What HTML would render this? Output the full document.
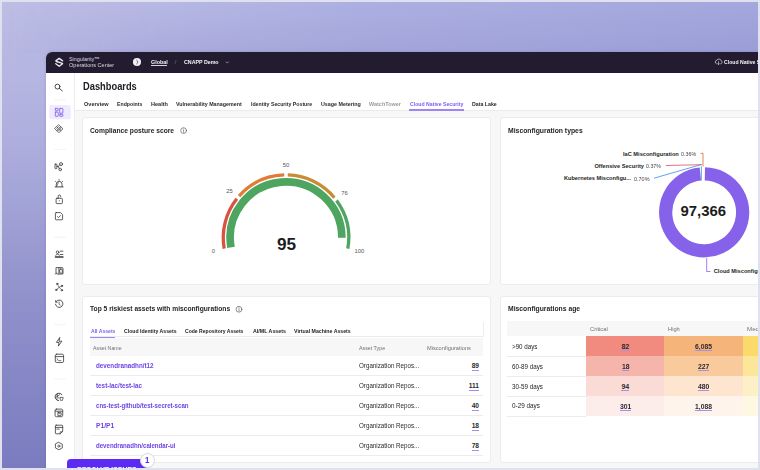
<!DOCTYPE html><html><head><meta charset="utf-8"><style>
*{margin:0;padding:0;box-sizing:border-box}
html,body{width:760px;height:470px;overflow:hidden;background:#e0e1ef;font-family:"Liberation Sans", sans-serif}
.t{position:absolute;white-space:nowrap;line-height:1}
#clip{position:absolute;left:2px;top:2px;width:755.7px;height:466px;overflow:hidden;
  background:linear-gradient(180deg,#bdbee5 0px,#adaedd 140px,#9090cb 300px,#7b7cc0 466px)}
#topov{position:absolute;left:0;top:0;width:760px;height:60px;background:linear-gradient(90deg,rgba(170,173,224,0) 0px,rgba(170,173,224,1) 360px,#a1a5dc 760px)}
#root{position:absolute;left:-2px;top:-2px;width:760px;height:470px}
#topov2{position:absolute;left:0;top:0;width:760px;height:52px;background:linear-gradient(180deg,rgba(255,255,255,0.03) 0px,rgba(60,50,140,0.06) 50px);-webkit-mask-image:linear-gradient(90deg,transparent 0px,#000 160px);mask-image:linear-gradient(90deg,transparent 0px,#000 160px)}
</style></head><body><div id="clip"><div id="topov"></div><div id="topov2"></div><div id="root"><div style="position:absolute;left:46px;top:52px;width:760px;height:430px;background:#f7f7f8;border-radius:6px 0 0 0;box-shadow:0 0 3px rgba(50,40,120,0.18)"></div><div style="position:absolute;left:46px;top:52px;width:760px;height:20.5px;background:#231b2f;border-radius:6px 0 0 0"></div><div style="position:absolute;left:46px;top:72.5px;width:28.5px;height:400px;background:#fff;border-right:1px solid #ececee"></div><div style="position:absolute;left:75px;top:72.5px;width:700px;height:38px;background:#fff;border-bottom:1px solid #ebebee"></div><div style="position:absolute;left:82px;top:117px;width:408.5px;height:167.5px;background:#fff;border:1px solid #ececee;border-radius:3px"></div><div style="position:absolute;left:499.5px;top:117px;width:300px;height:167.5px;background:#fff;border:1px solid #ececee;border-radius:3px"></div><div style="position:absolute;left:82px;top:295.8px;width:408.5px;height:167px;background:#fff;border:1px solid #ececee;border-radius:3px"></div><div style="position:absolute;left:499.5px;top:295.8px;width:300px;height:167px;background:#fff;border:1px solid #ececee;border-radius:3px"></div><div class="t" style="left:69.00px;top:56.60px;font-size:5.4px;font-weight:normal;color:#dcd9e4;">Singularity™</div><div class="t" style="left:69.00px;top:63.17px;font-size:5.6px;font-weight:normal;color:#dcd9e4;transform:scaleX(0.9887);transform-origin:0 0;">Operations Center</div><div class="t" style="left:150.90px;top:60.17px;font-size:5.6px;font-weight:bold;color:#f4f2f8;transform:scaleX(0.9652);transform-origin:0 0;">Global</div><div style="position:absolute;left:150.9px;top:64.9px;width:16.5px;height:0.6px;background:#d8d4e0"></div><div class="t" style="left:174.80px;top:60.21px;font-size:5.3px;font-weight:normal;color:#8a8596;">/</div><div class="t" style="left:184.20px;top:60.17px;font-size:5.6px;font-weight:bold;color:#f4f2f8;transform:scaleX(0.9459);transform-origin:0 0;">CNAPP Demo</div><div class="t" style="left:723.80px;top:59.67px;font-size:5.6px;font-weight:bold;color:#f4f2f8;transform:scaleX(0.9165);transform-origin:0 0;">Cloud Native Security</div><div class="t" style="left:83.00px;top:81.65px;font-size:10.4px;font-weight:bold;color:#202026;transform:scaleX(0.8957);transform-origin:0 0;">Dashboards</div><div class="t" style="left:83.80px;top:101.42px;font-size:6.0px;font-weight:bold;color:#2a2a30;transform:scaleX(0.9218);transform-origin:0 0;">Overview</div><div class="t" style="left:116.50px;top:101.42px;font-size:6.0px;font-weight:bold;color:#2a2a30;transform:scaleX(0.8656);transform-origin:0 0;">Endpoints</div><div class="t" style="left:150.70px;top:101.42px;font-size:6.0px;font-weight:bold;color:#2a2a30;transform:scaleX(0.9213);transform-origin:0 0;">Health</div><div class="t" style="left:176.20px;top:101.42px;font-size:6.0px;font-weight:bold;color:#2a2a30;transform:scaleX(0.8862);transform-origin:0 0;">Vulnerability Management</div><div class="t" style="left:251.00px;top:101.42px;font-size:6.0px;font-weight:bold;color:#2a2a30;transform:scaleX(0.8658);transform-origin:0 0;">Identity Security Posture</div><div class="t" style="left:321.00px;top:101.42px;font-size:6.0px;font-weight:bold;color:#2a2a30;transform:scaleX(0.8929);transform-origin:0 0;">Usage Metering</div><div class="t" style="left:369.00px;top:101.42px;font-size:6.0px;font-weight:bold;color:#9a9aa0;transform:scaleX(0.9139);transform-origin:0 0;">WatchTower</div><div class="t" style="left:410.00px;top:101.42px;font-size:6.0px;font-weight:bold;color:#7d5cf2;transform:scaleX(0.8611);transform-origin:0 0;">Cloud Native Security</div><div class="t" style="left:472.30px;top:101.42px;font-size:6.0px;font-weight:bold;color:#2a2a30;transform:scaleX(0.8710);transform-origin:0 0;">Data Lake</div><div style="position:absolute;left:409px;top:109px;width:55px;height:1.6px;background:#9d85f3"></div><div class="t" style="left:89.90px;top:126.84px;font-size:7.4px;font-weight:bold;color:#1f1f24;transform:scaleX(0.9060);transform-origin:0 0;">Compliance posture score</div><div class="t" style="left:507.90px;top:126.54px;font-size:7.4px;font-weight:bold;color:#1f1f24;transform:scaleX(0.9233);transform-origin:0 0;">Misconfiguration types</div><div class="t" style="left:90.30px;top:305.34px;font-size:7.4px;font-weight:bold;color:#1f1f24;transform:scaleX(0.9032);transform-origin:0 0;">Top 5 riskiest assets with misconfigurations</div><div class="t" style="left:507.70px;top:305.24px;font-size:7.4px;font-weight:bold;color:#1f1f24;transform:scaleX(0.9192);transform-origin:0 0;">Misconfigurations age</div><svg style="position:absolute;left:0;top:0" width="760" height="470"><path d="M224.20 248.60A62.75 62.75 0 0 1 236.82 198.72" stroke="#d9523f" stroke-width="3.3" fill="none"/><path d="M239.08 196.04A62.75 62.75 0 0 1 284.25 174.97" stroke="#e07b38" stroke-width="3.3" fill="none"/><path d="M287.75 174.97A62.75 62.75 0 0 1 334.35 197.70" stroke="#c98b34" stroke-width="3.3" fill="none"/><path d="M336.51 200.46A62.75 62.75 0 0 1 347.80 248.60" stroke="#4fa560" stroke-width="3.3" fill="none"/><path d="M231.00 247.40A55.85 55.85 0 1 1 341.85 237.70" stroke="#4ea55f" stroke-width="7.7" fill="none"/><path d="M704.87 173.81A38.5 38.5 0 1 1 700.38 173.99" stroke="#8661ea" stroke-width="13.2" fill="none"/><path d="M701.4 166.5V180.5" stroke="#3d8ef0" stroke-width="0.8"/><path d="M700.5 153.3H703V166.6" stroke="#dc7530" stroke-width="0.85" fill="none"/><path d="M665.8 165.5L702 164.7" stroke="#dc4a66" stroke-width="0.8" fill="none"/><path d="M654 178.2L701.2 164.6" stroke="#3a8af0" stroke-width="0.8" fill="none"/><path d="M706.7 258V271.5H710.5" stroke="#8661ea" stroke-width="0.8" fill="none"/></svg><div class="t" style="left:211.68px;top:249.25px;font-size:5.8px;font-weight:normal;color:#555;">0</div><div class="t" style="left:226.37px;top:189.05px;font-size:5.8px;font-weight:normal;color:#555;">25</div><div class="t" style="left:282.87px;top:162.85px;font-size:5.8px;font-weight:normal;color:#555;">50</div><div class="t" style="left:341.17px;top:191.25px;font-size:5.8px;font-weight:normal;color:#555;">76</div><div class="t" style="left:354.46px;top:249.25px;font-size:5.8px;font-weight:normal;color:#555;">100</div><div class="t" style="left:277.04px;top:236.46px;font-size:17.2px;font-weight:bold;color:#1c1c22;">95</div><div class="t" style="left:680.53px;top:204.06px;font-size:14.9px;font-weight:bold;color:#1c1c22;">97,366</div><div class="t" style="left:623.02px;top:151.67px;font-size:5.65px;font-weight:bold;color:#1f1f24;">IaC Misconfiguration</div><div class="t" style="left:680.60px;top:151.91px;font-size:5.3px;font-weight:normal;color:#45454b;transform:scaleX(1.0112);transform-origin:0 0;">0.36%</div><div class="t" style="left:594.45px;top:163.67px;font-size:5.65px;font-weight:bold;color:#1f1f24;">Offensive Security</div><div class="t" style="left:646.10px;top:163.91px;font-size:5.3px;font-weight:normal;color:#45454b;transform:scaleX(0.9913);transform-origin:0 0;">0.37%</div><div class="t" style="left:563.92px;top:176.37px;font-size:5.65px;font-weight:bold;color:#1f1f24;">Kubernetes Misconfigu...</div><div class="t" style="left:634.00px;top:176.61px;font-size:5.3px;font-weight:normal;color:#45454b;transform:scaleX(1.0312);transform-origin:0 0;">0.70%</div><div class="t" style="left:713.80px;top:268.57px;font-size:5.65px;font-weight:bold;color:#1f1f24;">Cloud Misconfiguration</div><div style="position:absolute;left:89.9px;top:321.8px;width:394px;height:15.5px;background:#fff;border-right:0.8px solid #ededf0;border-bottom:0.8px solid #ebebee"></div><div class="t" style="left:90.70px;top:329.03px;font-size:5.9px;font-weight:bold;color:#7d5cf2;transform:scaleX(0.8632);transform-origin:0 0;">All Assets</div><div class="t" style="left:123.90px;top:329.03px;font-size:5.9px;font-weight:bold;color:#222;transform:scaleX(0.8748);transform-origin:0 0;">Cloud Identity Assets</div><div class="t" style="left:185.00px;top:329.03px;font-size:5.9px;font-weight:bold;color:#222;transform:scaleX(0.8604);transform-origin:0 0;">Code Repository Assets</div><div class="t" style="left:252.50px;top:329.03px;font-size:5.9px;font-weight:bold;color:#222;transform:scaleX(0.8971);transform-origin:0 0;">AI/ML Assets</div><div class="t" style="left:294.20px;top:329.03px;font-size:5.9px;font-weight:bold;color:#222;transform:scaleX(0.8836);transform-origin:0 0;">Virtual Machine Assets</div><div style="position:absolute;left:89.9px;top:336.7px;width:25.3px;height:1.0px;background:#9d85f3"></div><div style="position:absolute;left:89.9px;top:338.3px;width:393px;height:17.4px;background:#f7f7f8"></div><div class="t" style="left:93.40px;top:345.57px;font-size:5.6px;font-weight:normal;color:#707078;transform:scaleX(0.9387);transform-origin:0 0;">Asset Name</div><div class="t" style="left:358.70px;top:345.57px;font-size:5.6px;font-weight:normal;color:#707078;transform:scaleX(0.9464);transform-origin:0 0;">Asset Type</div><div class="t" style="left:426.60px;top:345.57px;font-size:5.6px;font-weight:normal;color:#707078;transform:scaleX(1.0085);transform-origin:0 0;">Misconfigurations</div><div class="t" style="left:96.00px;top:362.70px;font-size:6.9px;font-weight:bold;color:#6b45e6;transform:scaleX(0.9116);transform-origin:0 0;">devendranadhn/t12</div><div class="t" style="left:359.10px;top:362.77px;font-size:6.4px;font-weight:normal;color:#2a2a30;transform:scaleX(0.9755);transform-origin:0 0;">Organization Repos...</div><div class="t" style="left:471.66px;top:362.74px;font-size:6.6px;font-weight:bold;color:#2a2a30;border-bottom:0.7px solid #a48cf5;padding-bottom:0.6px;">89</div><div style="position:absolute;left:89.9px;top:374.6px;width:393.5px;height:0.8px;background:#ececee"></div><div class="t" style="left:96.00px;top:382.70px;font-size:6.9px;font-weight:bold;color:#6b45e6;transform:scaleX(0.9168);transform-origin:0 0;">test-lac/test-lac</div><div class="t" style="left:359.10px;top:382.77px;font-size:6.4px;font-weight:normal;color:#2a2a30;transform:scaleX(0.9755);transform-origin:0 0;">Organization Repos...</div><div class="t" style="left:468.72px;top:382.74px;font-size:6.6px;font-weight:bold;color:#2a2a30;border-bottom:0.7px solid #a48cf5;padding-bottom:0.6px;">111</div><div style="position:absolute;left:89.9px;top:394.6px;width:393.5px;height:0.8px;background:#ececee"></div><div class="t" style="left:96.00px;top:402.70px;font-size:6.9px;font-weight:bold;color:#6b45e6;transform:scaleX(0.8849);transform-origin:0 0;">cns-test-github/test-secret-scan</div><div class="t" style="left:359.10px;top:402.77px;font-size:6.4px;font-weight:normal;color:#2a2a30;transform:scaleX(0.9755);transform-origin:0 0;">Organization Repos...</div><div class="t" style="left:471.66px;top:402.74px;font-size:6.6px;font-weight:bold;color:#2a2a30;border-bottom:0.7px solid #a48cf5;padding-bottom:0.6px;">40</div><div style="position:absolute;left:89.9px;top:414.6px;width:393.5px;height:0.8px;background:#ececee"></div><div class="t" style="left:96.00px;top:422.70px;font-size:6.9px;font-weight:bold;color:#6b45e6;transform:scaleX(0.9744);transform-origin:0 0;">P1/P1</div><div class="t" style="left:359.10px;top:422.77px;font-size:6.4px;font-weight:normal;color:#2a2a30;transform:scaleX(0.9755);transform-origin:0 0;">Organization Repos...</div><div class="t" style="left:471.66px;top:422.74px;font-size:6.6px;font-weight:bold;color:#2a2a30;border-bottom:0.7px solid #a48cf5;padding-bottom:0.6px;">18</div><div style="position:absolute;left:89.9px;top:434.6px;width:393.5px;height:0.8px;background:#ececee"></div><div class="t" style="left:96.00px;top:442.70px;font-size:6.9px;font-weight:bold;color:#6b45e6;transform:scaleX(0.8835);transform-origin:0 0;">devendranadhn/calendar-ui</div><div class="t" style="left:359.10px;top:442.77px;font-size:6.4px;font-weight:normal;color:#2a2a30;transform:scaleX(0.9755);transform-origin:0 0;">Organization Repos...</div><div class="t" style="left:471.66px;top:442.74px;font-size:6.6px;font-weight:bold;color:#2a2a30;border-bottom:0.7px solid #a48cf5;padding-bottom:0.6px;">78</div><div style="position:absolute;left:89.9px;top:454.6px;width:393.5px;height:0.8px;background:#ececee"></div><div style="position:absolute;left:507.4px;top:321.3px;width:260px;height:14.9px;background:#f7f7f8"></div><div class="t" style="left:589.80px;top:326.87px;font-size:5.6px;font-weight:normal;color:#707078;transform:scaleX(1.0413);transform-origin:0 0;">Critical</div><div class="t" style="left:667.90px;top:326.87px;font-size:5.6px;font-weight:normal;color:#707078;transform:scaleX(1.0247);transform-origin:0 0;">High</div><div class="t" style="left:746.50px;top:326.87px;font-size:5.6px;font-weight:normal;color:#707078;transform:scaleX(1.1052);transform-origin:0 0;">Medium</div><div style="position:absolute;left:586px;top:336.2px;width:78.2px;height:20.07px;background:#f18b80"></div><div style="position:absolute;left:664.2px;top:336.2px;width:78.5px;height:20.07px;background:#f5b47a"></div><div style="position:absolute;left:742.7px;top:336.2px;width:40px;height:20.07px;background:#fbda6c"></div><div style="position:absolute;left:507.4px;top:355.82px;width:78.6px;height:0.9px;background:#ececef"></div><div style="position:absolute;left:586px;top:355.82px;width:200px;height:0.9px;background:rgba(255,255,255,0.45)"></div><div class="t" style="left:511.80px;top:343.94px;font-size:6.6px;font-weight:normal;color:#1f1f24;transform:scaleX(0.9461);transform-origin:0 0;">&gt;90 days</div><div class="t" style="left:621.40px;top:342.99px;font-size:7.0px;font-weight:bold;color:#2a2a30;">82</div><div class="t" style="left:695.25px;top:342.99px;font-size:7.0px;font-weight:bold;color:#2a2a30;transform:scaleX(0.9640);transform-origin:0 0;">6,085</div><div style="position:absolute;left:621.3999999999999px;top:350.0px;width:7.800000000000001px;height:0.8px;background:#a48ef0"></div><div style="position:absolute;left:695.25px;top:350.0px;width:16.9px;height:0.8px;background:#a48ef0"></div><div style="position:absolute;left:586px;top:356.27px;width:78.2px;height:20.07px;background:#f6b5ab"></div><div style="position:absolute;left:664.2px;top:356.27px;width:78.5px;height:20.07px;background:#f9cb9c"></div><div style="position:absolute;left:742.7px;top:356.27px;width:40px;height:20.07px;background:#fce69a"></div><div style="position:absolute;left:507.4px;top:375.89px;width:78.6px;height:0.9px;background:#ececef"></div><div style="position:absolute;left:586px;top:375.89px;width:200px;height:0.9px;background:rgba(255,255,255,0.45)"></div><div class="t" style="left:511.80px;top:363.79px;font-size:6.6px;font-weight:normal;color:#1f1f24;transform:scaleX(0.9502);transform-origin:0 0;">60-89 days</div><div class="t" style="left:621.50px;top:362.94px;font-size:7.0px;font-weight:bold;color:#2a2a30;transform:scaleX(0.9747);transform-origin:0 0;">18</div><div class="t" style="left:698.00px;top:362.94px;font-size:7.0px;font-weight:bold;color:#2a2a30;transform:scaleX(0.9754);transform-origin:0 0;">227</div><div style="position:absolute;left:621.4999999999999px;top:369.95px;width:7.6000000000000005px;height:0.8px;background:#a48ef0"></div><div style="position:absolute;left:698.0px;top:369.95px;width:11.4px;height:0.8px;background:#a48ef0"></div><div style="position:absolute;left:586px;top:376.34px;width:78.2px;height:20.07px;background:#fadbd6"></div><div style="position:absolute;left:664.2px;top:376.34px;width:78.5px;height:20.07px;background:#fde5d0"></div><div style="position:absolute;left:742.7px;top:376.34px;width:40px;height:20.07px;background:#fdf0c6"></div><div style="position:absolute;left:507.4px;top:395.96px;width:78.6px;height:0.9px;background:#ececef"></div><div style="position:absolute;left:586px;top:395.96px;width:200px;height:0.9px;background:rgba(255,255,255,0.45)"></div><div class="t" style="left:511.80px;top:383.64px;font-size:6.6px;font-weight:normal;color:#1f1f24;transform:scaleX(0.9502);transform-origin:0 0;">30-59 days</div><div class="t" style="left:621.40px;top:382.89px;font-size:7.0px;font-weight:bold;color:#2a2a30;">94</div><div class="t" style="left:698.00px;top:382.89px;font-size:7.0px;font-weight:bold;color:#2a2a30;transform:scaleX(0.9754);transform-origin:0 0;">480</div><div style="position:absolute;left:621.3999999999999px;top:389.9px;width:7.800000000000001px;height:0.8px;background:#a48ef0"></div><div style="position:absolute;left:698.0px;top:389.9px;width:11.4px;height:0.8px;background:#a48ef0"></div><div style="position:absolute;left:586px;top:396.40999999999997px;width:78.2px;height:20.07px;background:#fcecea"></div><div style="position:absolute;left:664.2px;top:396.40999999999997px;width:78.5px;height:20.07px;background:#fef4eb"></div><div style="position:absolute;left:742.7px;top:396.40999999999997px;width:40px;height:20.07px;background:#fef7e2"></div><div style="position:absolute;left:507.4px;top:416.03px;width:78.6px;height:0.9px;background:#ececef"></div><div style="position:absolute;left:586px;top:416.03px;width:200px;height:0.9px;background:rgba(255,255,255,0.45)"></div><div class="t" style="left:511.80px;top:403.49px;font-size:6.6px;font-weight:normal;color:#1f1f24;transform:scaleX(0.9631);transform-origin:0 0;">0-29 days</div><div class="t" style="left:619.60px;top:402.84px;font-size:7.0px;font-weight:bold;color:#2a2a30;transform:scaleX(0.9754);transform-origin:0 0;">301</div><div class="t" style="left:695.25px;top:402.84px;font-size:7.0px;font-weight:bold;color:#2a2a30;transform:scaleX(0.9640);transform-origin:0 0;">1,088</div><div style="position:absolute;left:619.5999999999999px;top:409.85px;width:11.4px;height:0.8px;background:#a48ef0"></div><div style="position:absolute;left:695.25px;top:409.85px;width:16.9px;height:0.8px;background:#a48ef0"></div><svg style="position:absolute;left:0;top:0" width="760" height="470" fill="none" stroke="#36363c" stroke-width="0.8" stroke-linecap="round" stroke-linejoin="round"><path d="M54.5 100H65.7" stroke="#ebebee" stroke-width="0.6"/><path d="M54.5 149.3H65.7" stroke="#ebebee" stroke-width="0.6"/><path d="M54.5 237.2H65.7" stroke="#ebebee" stroke-width="0.6"/><path d="M54.5 324.6H65.7" stroke="#ebebee" stroke-width="0.6"/><path d="M54.5 378.9H65.7" stroke="#ebebee" stroke-width="0.6"/><rect x="49.2" y="104.9" width="21.6" height="14.4" rx="2" fill="#efebfd" stroke="none"/><circle cx="57.5" cy="86.6" r="2.45" stroke-width="0.9"/><path d="M59.3 88.4L62.3 90.9" stroke-width="0.9"/><g stroke="#7a56ec" stroke-width="0.8"><rect x="55.3" y="108.4" width="2.9" height="2.3" rx="0.4"/><rect x="55.3" y="112.1" width="2.9" height="4.2" rx="0.4"/><rect x="59.7" y="108.4" width="3.2" height="4.8" rx="0.4"/><rect x="59.7" y="114.3" width="3.2" height="2.0" rx="0.4"/></g><path d="M58.9 124.9L63.0 128.8L58.9 132.7L54.8 128.8Z" stroke-width="0.7"/><path d="M56.9 126.9L60.9 130.7M60.9 126.9L56.9 130.7" stroke-width="0.6"/><path d="M58.9 126.8L60.9 128.8L58.9 130.8L56.9 128.8Z" stroke-width="0.6"/><rect x="55" y="164.2" width="1.9" height="4.4" rx="0.3"/><circle cx="61" cy="164.1" r="1.5"/><circle cx="60.2" cy="169.5" r="1.3"/><path d="M56.9 166.4H58.3L59.8 164.8M58.3 166.4L59.3 168.5"/><path d="M56.3 186.7V184.2A2.85 2.85 0 0 1 62 184.2V186.7" /><path d="M55.2 186.9H63.1" stroke-width="0.9"/><path d="M59.1 179.4V180.3M55.4 181.3L56.1 181.9M62.8 181.3L62.1 181.9M56.9 185.6L58.3 182.6" stroke-width="0.7"/><rect x="56.1" y="198.3" width="6.3" height="5.3" rx="0.8"/><path d="M58.2 198.3V196.2A1.2 1.2 0 0 1 60.6 196.2V196.8"/><circle cx="59.3" cy="200.8" r="0.5" fill="#36363c" stroke="none"/><path d="M56.2 212.6H60.5L62.6 214.7V219.2A0.6 0.6 0 0 1 62 219.8H56.2A0.8 0.8 0 0 1 55.4 219V213.4A0.8 0.8 0 0 1 56.2 212.6Z"/><path d="M57.5 216.6L58.6 217.6L60.4 215.6"/><circle cx="57.6" cy="252.2" r="1.3"/><path d="M55.7 255.1Q57.6 252.8 59.5 255.1"/><path d="M60.3 251.2H62.9M60.3 254.5H62.9"/><path d="M55.4 257H63" stroke-width="1.3"/><path d="M56.4 267.6H62.2A0.8 0.8 0 0 1 63 268.4V274H57.2A1.2 1.2 0 0 1 56 272.8V268Z"/><path d="M58.9 267.6V274M55.3 274.2L56.5 272.8"/><rect x="59.7" y="269" width="2.6" height="4.2" rx="1" /><path d="M57.2 283.9L59.2 287.4L61.9 285.9M59.2 287.4L56.2 289.8M59.2 287.4L61.9 290.1" stroke-width="0.6"/><circle cx="57.2" cy="283.9" r="0.7"/><circle cx="61.9" cy="285.9" r="0.7"/><circle cx="56.2" cy="289.9" r="0.7"/><circle cx="61.9" cy="290.2" r="0.7"/><path d="M56.2 301.5A3.7 3.7 0 1 1 55.5 304.2" stroke-width="0.85"/><path d="M55.6 300.6V302.2H57.2" stroke-width="0.8"/><path d="M59.1 302V304.2L60.3 305" stroke-width="0.7"/><path d="M59.6 337.7L56.4 342.4H59L58.3 346.1L61.9 341.2H59.4Z" stroke-width="0.8"/><rect x="55.3" y="354.2" width="8.3" height="8.3" rx="1.4"/><path d="M55.3 356.6H63.6"/><path d="M57 358.6L57.9 359.4L57 360.2M58.7 360.6H60.8" stroke-width="0.7"/><path d="M61.9 394.6A3.8 3.8 0 1 0 58.6 400.7" stroke-width="0.9"/><path d="M56.3 394.3L58.8 398.4M55.4 397.6L59.8 394.6M57.5 393.4L56.9 399.8" stroke-width="0.6"/><path d="M60.3 397.4H63.2L62.4 400.4H60.9Z" stroke-width="0.7"/><rect x="55.1" y="409.1" width="7.6" height="7.6" rx="1.3"/><path d="M55.1 411.2H62.7"/><rect x="57.9" y="412.4" width="3.2" height="3.3" rx="0.3"/><path d="M59 413.6H60.1" stroke-width="0.6"/><path d="M56.2 425.2H61.9A0.8 0.8 0 0 1 62.7 426V431.2L60.2 433.8H56.2A0.8 0.8 0 0 1 55.4 433V426A0.8 0.8 0 0 1 56.2 425.2Z"/><path d="M55.4 427.4H62.7M56.8 429.1H59.2"/><path d="M60.2 433.8V431.8H62.4" stroke-width="0.7"/><path d="M58.85 442.4L62.3 444.3V447.9L58.85 449.8L55.4 447.9V444.3Z" stroke-width="0.8"/><circle cx="58.85" cy="446.1" r="1.1" stroke-width="0.7"/><path d="M55.8 60.9L59.2 58.4L62.6 60.9M56.4 61.5L61.9 63.1M55.8 63.7L59.2 66.2L62.6 63.7" stroke="#ece9f3" stroke-width="1.35" stroke-linejoin="round" stroke-linecap="round"/><circle cx="137" cy="62" r="4.05" fill="#f2f0f6" stroke="none"/><path d="M136.6 60A2.3 2.3 0 0 1 136.6 64" stroke="#55505f" stroke-width="0.8"/><path d="M226.1 61.8L227.35 63.1L228.6 61.8" stroke="#cfcbd8" stroke-width="0.6"/><path d="M716.4 63.8A1.9 1.9 0 0 1 716.8 60.2A2.5 2.5 0 0 1 721.3 60.9A1.6 1.6 0 0 1 720.8 63.8" stroke="#e8e5ee" stroke-width="0.7"/><path d="M718.5 61.6V64.5M717.6 63.7L718.5 64.6L719.4 63.7" stroke="#e8e5ee" stroke-width="0.6"/><circle cx="183.6" cy="130.6" r="2.9" stroke="#44444a" stroke-width="0.6"/><path d="M183.6 130V132.2" stroke="#44444a" stroke-width="0.6"/><circle cx="183.6" cy="128.9" r="0.4" fill="#44444a" stroke="none"/><circle cx="239" cy="309.3" r="2.9" stroke="#44444a" stroke-width="0.6"/><path d="M239 308.7V310.9" stroke="#44444a" stroke-width="0.6"/><circle cx="239" cy="307.6" r="0.4" fill="#44444a" stroke="none"/></svg><div style="position:absolute;left:67.3px;top:458.8px;width:80px;height:20px;background:#5b2bf4;border-radius:4px"></div><div class="t" style="left:76.50px;top:466.32px;font-size:7.5px;font-weight:bold;color:#fff;transform:scaleX(0.9185);transform-origin:0 0;">RESOLVE ISSUES</div><div style="position:absolute;left:139.6px;top:452.8px;width:15.4px;height:15.4px;background:#fff;border:1px solid #d6d6dc;border-radius:50%"></div><div class="t" style="left:144.90px;top:457.43px;font-size:8.2px;font-weight:bold;color:#5a2ef0;transform:scaleX(0.9644);transform-origin:0 0;">1</div></div></div></body></html>
